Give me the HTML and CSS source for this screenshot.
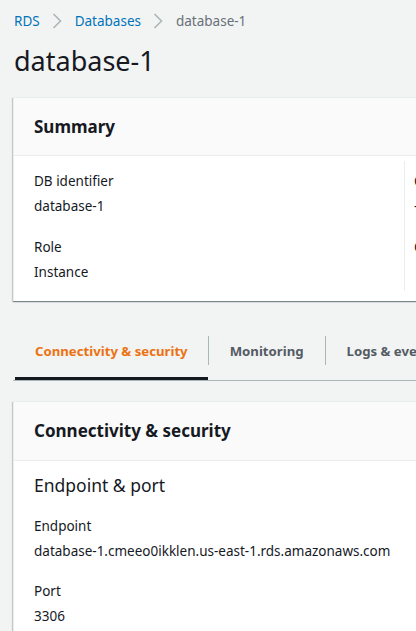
FILE: index.html
```html
<!DOCTYPE html>
<html>
<head>
<meta charset="utf-8">
<link rel="stylesheet" href="styles.css">
</head>
<body>
<div class="page">
  <nav class="crumbs">
    <a class="crumb-link">RDS</a>
    <svg class="chev" width="10" height="16" viewBox="0 0 10 16"><path d="M1.5 1 L8.5 8 L1.5 15" fill="none" stroke="#aab7b8" stroke-width="1.6"/></svg>
    <a class="crumb-link">Databases</a>
    <svg class="chev" width="10" height="16" viewBox="0 0 10 16"><path d="M1.5 1 L8.5 8 L1.5 15" fill="none" stroke="#aab7b8" stroke-width="1.6"/></svg>
    <span class="crumb-cur">database-1</span>
  </nav>
  <h1 class="title">database-1</h1>

  <section class="card summary">
    <header class="card-head"><h2>Summary</h2></header>
    <div class="cols">
      <div class="col">
        <div class="kv">
          <div class="k">DB identifier</div>
          <div class="v">database-1</div>
        </div>
        <div class="kv">
          <div class="k">Role</div>
          <div class="v">Instance</div>
        </div>
      </div>
      <div class="col col2">
        <div class="kv">
          <div class="k">CPU</div>
          <div class="v">-</div>
        </div>
        <div class="kv">
          <div class="k">Class</div>
          <div class="v">&nbsp;</div>
        </div>
      </div>
    </div>
  </section>

  <div class="tabs">
    <div class="tab active">Connectivity &amp; security</div>
    <div class="tab">Monitoring</div>
    <div class="tab">Logs &amp; events</div>
  </div>

  <section class="card conn">
    <header class="card-head"><h2>Connectivity &amp; security</h2></header>
    <div class="card-body">
      <h3 class="sub">Endpoint &amp; port</h3>
      <div class="kv">
        <div class="k">Endpoint</div>
        <div class="v">database-1.cmeeo0ikklen.us-east-1.rds.amazonaws.com</div>
      </div>
      <div class="kv">
        <div class="k">Port</div>
        <div class="v">3306</div>
      </div>
    </div>
  </section>
</div>
</body>
</html>
```

FILE: styles.css
```css
html, body {
  margin: 0;
  padding: 0;
  background: #f2f3f3;
  overflow: hidden;
}
body {
  font-family: "Noto Sans", "Open Sans", sans-serif;
  font-size: 13.5px;
  color: #16191f;
  width: 416px;
  height: 631px;
}
.page {
  padding: 10px 0 0 13px;
  width: 700px;
}
.crumbs {
  display: flex;
  align-items: center;
  height: 22px;
  padding-left: 1px;
}
.crumb-link {
  color: #0073bb;
}
.crumb-cur {
  color: #687078;
}
.chev {
  margin: 0 13px 0 12px;
}
.title {
  margin: 9px 0 0 1px;
  font-size: 27px;
  font-weight: 400;
  line-height: 40px;
  color: #16191f;
}
.card {
  background: #fff;
  border-top: 1px solid #eaeded;
  border-left: 1px solid #eaeded;
  box-shadow: 0 1px 1px 0 rgba(0,28,36,0.3), 1px 1px 1px 0 rgba(0,28,36,0.15), -1px 1px 1px 0 rgba(0,28,36,0.15);
}
.summary {
  margin-top: 16px;
}
.card-head {
  background: #fafafa;
  border-bottom: 1px solid #eaeded;
  height: 57px;
  display: flex;
  align-items: center;
  padding-left: 20px;
}
.card-head h2 {
  margin: 0;
  font-size: 17px;
  font-weight: 700;
  line-height: 22px;
}
.card-body {
  padding: 11px 20px 10px 20px;
}
.cols {
  display: flex;
  padding: 5px 0 10px 20px;
}
.col {
  width: 370px;
  flex-shrink: 0;
  padding-top: 8px;
}
.col2 {
  border-left: 1px solid #eaeded;
  padding-left: 9px;
}
.kv {
  margin-bottom: 15px;
}
.cols .kv {
  margin-bottom: 16px;
}
.cols .kv:last-child {
  margin-bottom: 6px;
}
.kv .k,
.kv .v {
  line-height: 25px;
  color: #16191f;
}
.tabs {
  display: flex;
  margin-top: 32px;
  border-bottom: 1px solid #aab7b8;
  padding-left: 2px;
}
.tab {
  position: relative;
  font-weight: 700;
  font-size: 13.2px;
  color: #545b64;
  line-height: 20px;
  padding: 8px 21px 19px 22px;
  white-space: nowrap;
}
.tab + .tab::before {
  content: "";
  position: absolute;
  left: 0;
  top: 3px;
  height: 29px;
  border-left: 1px solid #aab7b8;
}
.tab.active {
  color: #ec7211;
  border-bottom: 3px solid #16191f;
  padding: 8px 20px 16px 20px;
}
.conn {
  margin-top: 20px;
}
.conn .card-head {
  height: 58px;
}
.sub {
  margin: 0 0 16px 0;
  font-size: 17.5px;
  font-weight: 400;
  line-height: 26px;
}
```
